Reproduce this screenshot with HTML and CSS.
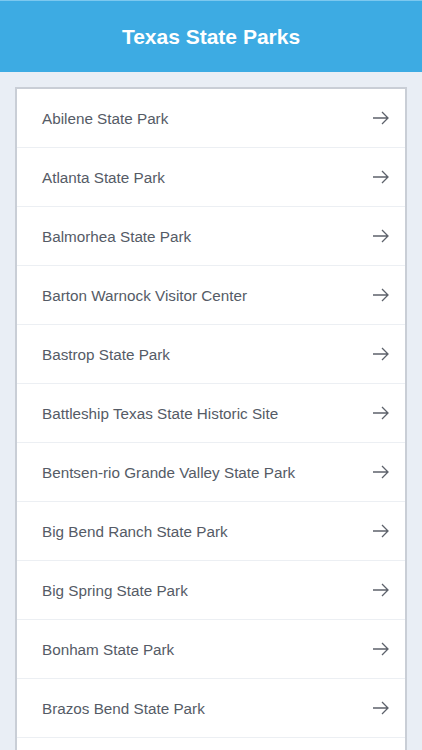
FILE: index.html
```html
<!DOCTYPE html>
<html lang="en">
<head>
    <meta charset="UTF-8">
    <meta name="viewport" content="width=device-width, initial-scale=1.0">
    <title>Texas State Parks</title>
    <link rel="stylesheet" href="styles.css">
</head>
<body>
    <header class="top-bar">
        <h1>Texas State Parks</h1>
    </header>

    <div class="content">
        <ul class="park-list">
            <li class="park-item"><span>Abilene State Park</span><svg class="arrow" viewBox="0 0 18 14"><path d="M1 7h15M10 1l6 6-6 6"/></svg></li>
            <li class="park-item"><span>Atlanta State Park</span><svg class="arrow" viewBox="0 0 18 14"><path d="M1 7h15M10 1l6 6-6 6"/></svg></li>
            <li class="park-item"><span>Balmorhea State Park</span><svg class="arrow" viewBox="0 0 18 14"><path d="M1 7h15M10 1l6 6-6 6"/></svg></li>
            <li class="park-item"><span>Barton Warnock Visitor Center</span><svg class="arrow" viewBox="0 0 18 14"><path d="M1 7h15M10 1l6 6-6 6"/></svg></li>
            <li class="park-item"><span>Bastrop State Park</span><svg class="arrow" viewBox="0 0 18 14"><path d="M1 7h15M10 1l6 6-6 6"/></svg></li>
            <li class="park-item"><span>Battleship Texas State Historic Site</span><svg class="arrow" viewBox="0 0 18 14"><path d="M1 7h15M10 1l6 6-6 6"/></svg></li>
            <li class="park-item"><span>Bentsen-rio Grande Valley State Park</span><svg class="arrow" viewBox="0 0 18 14"><path d="M1 7h15M10 1l6 6-6 6"/></svg></li>
            <li class="park-item"><span>Big Bend Ranch State Park</span><svg class="arrow" viewBox="0 0 18 14"><path d="M1 7h15M10 1l6 6-6 6"/></svg></li>
            <li class="park-item"><span>Big Spring State Park</span><svg class="arrow" viewBox="0 0 18 14"><path d="M1 7h15M10 1l6 6-6 6"/></svg></li>
            <li class="park-item"><span>Bonham State Park</span><svg class="arrow" viewBox="0 0 18 14"><path d="M1 7h15M10 1l6 6-6 6"/></svg></li>
            <li class="park-item"><span>Brazos Bend State Park</span><svg class="arrow" viewBox="0 0 18 14"><path d="M1 7h15M10 1l6 6-6 6"/></svg></li>
            <li class="park-item"><span>Buescher State Park</span><svg class="arrow" viewBox="0 0 18 14"><path d="M1 7h15M10 1l6 6-6 6"/></svg></li>
        </ul>
    </div>
</body>
</html>
```

FILE: styles.css
```css
body {
    margin: 0;
    font-family: 'Liberation Sans', Arial, sans-serif;
    background-color: #e9eef5;
    color: #555b66;
}
.top-bar {
    background-color: #3dabe3;
    border-top: 1px solid #7cc8ef;
    height: 71px;
    display: flex;
    align-items: center;
    justify-content: center;
}
.top-bar h1 {
    margin: 0;
    color: #fff;
    font-size: 21px;
    font-weight: bold;
}
.content {
    padding: 15px 15px 0;
}
.park-list {
    list-style: none;
    margin: 0;
    padding: 0;
    background-color: #fff;
    border: 2px solid #c9ced6;
    border-bottom: none;
}
.park-item {
    display: flex;
    align-items: center;
    justify-content: space-between;
    height: 58px;
    padding: 0 15px 0 25px;
    border-bottom: 1px solid #eceff3;
    font-size: 15.25px;
}
.arrow {
    width: 18px;
    height: 14px;
    fill: none;
    stroke: #5d626b;
    stroke-width: 1.3;
}
```
